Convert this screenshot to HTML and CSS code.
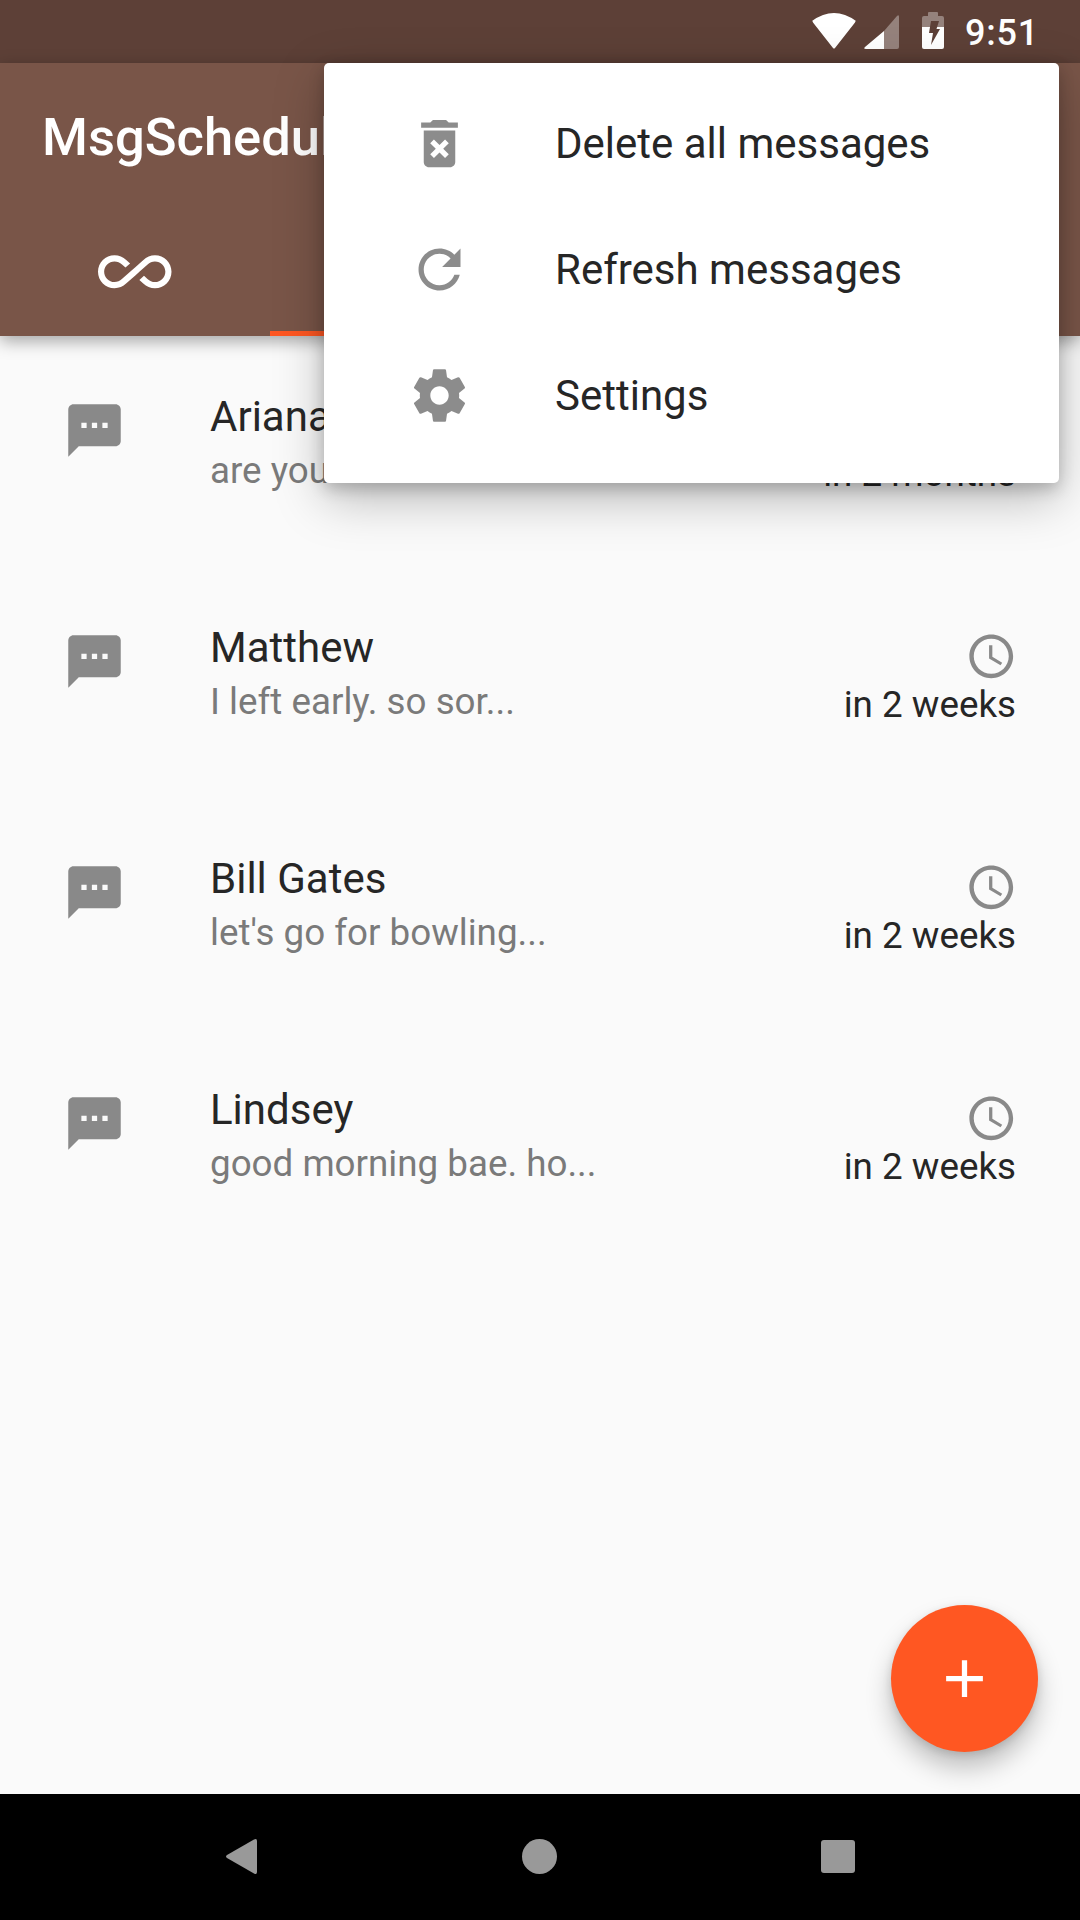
FILE: index.html
```html
<!DOCTYPE html>
<html lang="en">
<head>
  <meta charset="UTF-8">
  <title>MsgScheduler</title>
  <link rel="stylesheet" href="styles.css">
</head>
<body>

  <div class="screen">
    <div class="status-bar">
      <svg class="wifi" width="44" height="36" viewBox="0 0 44 36"><path d="M1 9.500Q1 8 0 8Q22-8 44 8Q43 8 43 9.500L23 35Q22 36 21 35Z" fill="#fff"/></svg>
      <svg class="signal" width="35" height="34" viewBox="0 0 35 34">
        <path d="M20 16L33 1Q35-1 35 2V32Q35 34 33 34H20Z" fill="#fff" opacity=".35"/>
        <path d="M20 16V34H2Q-1 34 1 32Z" fill="#fff"/>
      </svg>
      <svg class="battery" width="22" height="37" viewBox="0 0 22 37">
        <path d="M0 15V6Q0 4 2 4H6V1Q6 0 7 0H15Q16 0 16 1V4H20Q22 4 22 6V15Z" fill="#fff" opacity=".35"/>
        <path d="M0 15H22V35Q22 37 20 37H2Q0 37 0 35Z" fill="#fff"/>
        <path d="M9 9H17L14.500 17H18L9 33L11 21H7Z" fill="#5d4037"/>
      </svg>
      <span class="clock">9:51</span>
    </div>

    <header class="app-bar">
      <div class="toolbar">MsgScheduler</div>
      <div class="tabs">
        <div class="tab">
          <svg class="tab-icon" viewBox="0 0 24 24"><path fill="#fff" d="M18.6 6.620c-1.440 0-2.800.560-3.770 1.530L12 10.660 10.480 12h.010L7.800 14.390c-.640.640-1.490.990-2.400.990-1.870 0-3.390-1.510-3.390-3.380S3.530 8.620 5.400 8.620c.910 0 1.760.350 2.440 1.030l1.130 1 1.510-1.340L9.220 8.200C8.200 7.180 6.840 6.620 5.400 6.620 2.420 6.620 0 9.040 0 12s2.420 5.380 5.400 5.380c1.440 0 2.800-.560 3.770-1.530l2.830-2.500.010.010L13.520 12h-.010l2.690-2.390c.640-.640 1.490-.990 2.400-.990 1.870 0 3.390 1.510 3.390 3.380s-1.520 3.380-3.390 3.380c-.900 0-1.760-.350-2.440-1.030l-1.140-1.010-1.510 1.340 1.270 1.120c1.020 1.010 2.370 1.570 3.820 1.570 2.980 0 5.400-2.410 5.400-5.380s-2.420-5.370-5.400-5.370z"/></svg>
        </div>
        <div class="tab active"></div>
        <div class="tab"></div>
        <div class="tab"></div>
      </div>
    </header>

    <main class="list">
      <div class="row">
        <svg class="icon" viewBox="0 0 24 24"><path class="grey" d="M20 2H4c-1.100 0-1.990.900-1.990 2L2 22l4-4h14c1.100 0 2-.900 2-2V4c0-1.100-.900-2-2-2zM9 11H7V9h2v2zm4 0h-2V9h2v2zm4 0h-2V9h2v2z"/></svg>
        <div class="row-text">
          <div class="name">Ariana</div>
          <div class="preview">are you there...</div>
        </div>
        <div class="when">
          <svg class="clock-icon" viewBox="0 0 24 24"><path class="grey" d="M11.990 2C6.470 2 2 6.480 2 12s4.470 10 9.990 10C17.520 22 22 17.520 22 12S17.520 2 11.990 2zM12 20c-4.420 0-8-3.580-8-8s3.580-8 8-8 8 3.580 8 8-3.580 8-8 8z"/><path class="grey" d="M12.500 7H11v6l5.250 3.150.750-1.230-4.500-2.670z"/></svg>
          <div class="when-text">in 2 months</div>
        </div>
      </div>

      <div class="row">
        <svg class="icon" viewBox="0 0 24 24"><path class="grey" d="M20 2H4c-1.100 0-1.990.900-1.990 2L2 22l4-4h14c1.100 0 2-.900 2-2V4c0-1.100-.900-2-2-2zM9 11H7V9h2v2zm4 0h-2V9h2v2zm4 0h-2V9h2v2z"/></svg>
        <div class="row-text">
          <div class="name">Matthew</div>
          <div class="preview">I left early. so sor...</div>
        </div>
        <div class="when">
          <svg class="clock-icon" viewBox="0 0 24 24"><path class="grey" d="M11.990 2C6.470 2 2 6.480 2 12s4.470 10 9.990 10C17.520 22 22 17.520 22 12S17.520 2 11.990 2zM12 20c-4.420 0-8-3.580-8-8s3.580-8 8-8 8 3.580 8 8-3.580 8-8 8z"/><path class="grey" d="M12.500 7H11v6l5.250 3.150.750-1.230-4.500-2.670z"/></svg>
          <div class="when-text">in 2 weeks</div>
        </div>
      </div>

      <div class="row">
        <svg class="icon" viewBox="0 0 24 24"><path class="grey" d="M20 2H4c-1.100 0-1.990.900-1.990 2L2 22l4-4h14c1.100 0 2-.900 2-2V4c0-1.100-.900-2-2-2zM9 11H7V9h2v2zm4 0h-2V9h2v2zm4 0h-2V9h2v2z"/></svg>
        <div class="row-text">
          <div class="name">Bill Gates</div>
          <div class="preview">let's go for bowling...</div>
        </div>
        <div class="when">
          <svg class="clock-icon" viewBox="0 0 24 24"><path class="grey" d="M11.990 2C6.470 2 2 6.480 2 12s4.470 10 9.990 10C17.520 22 22 17.520 22 12S17.520 2 11.990 2zM12 20c-4.420 0-8-3.580-8-8s3.580-8 8-8 8 3.580 8 8-3.580 8-8 8z"/><path class="grey" d="M12.500 7H11v6l5.250 3.150.750-1.230-4.500-2.670z"/></svg>
          <div class="when-text">in 2 weeks</div>
        </div>
      </div>

      <div class="row">
        <svg class="icon" viewBox="0 0 24 24"><path class="grey" d="M20 2H4c-1.100 0-1.990.900-1.990 2L2 22l4-4h14c1.100 0 2-.900 2-2V4c0-1.100-.900-2-2-2zM9 11H7V9h2v2zm4 0h-2V9h2v2zm4 0h-2V9h2v2z"/></svg>
        <div class="row-text">
          <div class="name">Lindsey</div>
          <div class="preview">good morning bae. ho...</div>
        </div>
        <div class="when">
          <svg class="clock-icon" viewBox="0 0 24 24"><path class="grey" d="M11.990 2C6.470 2 2 6.480 2 12s4.470 10 9.990 10C17.520 22 22 17.520 22 12S17.520 2 11.990 2zM12 20c-4.420 0-8-3.580-8-8s3.580-8 8-8 8 3.580 8 8-3.580 8-8 8z"/><path class="grey" d="M12.500 7H11v6l5.250 3.150.750-1.230-4.500-2.670z"/></svg>
          <div class="when-text">in 2 weeks</div>
        </div>
      </div>
    </main>

    <nav class="nav-bar">
      <svg width="31" height="35" viewBox="0 0 31 35"><path d="M1 19Q-1 17.500 1 16L28 .500Q31-1 31 2V33Q31 36 28 34.500Z" fill="#999"/></svg>
      <div class="nav-circle"></div>
      <div class="nav-square"></div>
    </nav>

    <!-- popup menu lies over the app bar and the first row -->
    <div class="menu">
      <div class="menu-item">
        <svg class="icon" viewBox="0 0 24 24"><path class="grey" d="M6 19c0 1.100.900 2 2 2h8c1.100 0 2-.900 2-2V7H6v12zm2.460-7.120l1.410-1.410L12 12.590l2.120-2.120 1.410 1.410L13.410 14l2.120 2.120-1.410 1.410L12 15.410l-2.120 2.120-1.410-1.410L10.590 14l-2.130-2.120zM15.500 4l-1-1h-5l-1 1H5v2h14V4z"/></svg>
        <span>Delete all messages</span>
      </div>
      <div class="menu-item">
        <svg class="icon" viewBox="0 0 24 24"><path class="grey" d="M17.650 6.350C16.200 4.900 14.210 4 12 4c-4.420 0-7.990 3.580-7.990 8s3.570 8 7.990 8c3.730 0 6.840-2.550 7.730-6h-2.080c-.820 2.330-3.040 4-5.650 4-3.310 0-6-2.690-6-6s2.690-6 6-6c1.660 0 3.140.690 4.220 1.780L13 11h7V4l-2.350 2.350z"/></svg>
        <span>Refresh messages</span>
      </div>
      <div class="menu-item">
        <svg class="icon" viewBox="0 0 24 24"><path class="grey" d="M19.430 12.980c.040-.320.070-.640.070-.980s-.030-.660-.070-.980l2.110-1.650c.190-.150.240-.420.120-.640l-2-3.460c-.120-.220-.390-.300-.610-.220l-2.490 1c-.520-.400-1.080-.730-1.690-.980l-.380-2.650C14.460 2.180 14.250 2 14 2h-4c-.250 0-.460.180-.490.420l-.380 2.650c-.610.250-1.170.590-1.690.980l-2.490-1c-.230-.090-.490 0-.610.220l-2 3.460c-.130.220-.070.490.120.640l2.110 1.650c-.040.320-.070.650-.070.980s.030.660.070.980l-2.110 1.650c-.190.150-.240.420-.120.640l2 3.460c.120.220.390.300.610.220l2.490-1c.520.400 1.080.730 1.690.980l.380 2.650c.030.240.240.420.490.420h4c.250 0 .460-.180.490-.420l.380-2.650c.610-.250 1.170-.590 1.690-.980l2.490 1c.230.090.490 0 .610-.220l2-3.460c.120-.220.070-.490-.120-.640l-2.110-1.650zM12 15.500c-1.930 0-3.500-1.570-3.500-3.500s1.570-3.500 3.500-3.500 3.500 1.570 3.500 3.500-1.570 3.500-3.500 3.500z"/></svg>
        <span>Settings</span>
      </div>
    </div>

    <div class="fab">
      <svg class="icon" viewBox="0 0 24 24"><path fill="#fff" d="M19 13h-6v6h-2v-6H5v-2h6V5h2v6h6v2z"/></svg>
    </div>
  </div>

</body>
</html>
```

FILE: styles.css
```css
body {
  margin: 0;
  font-family: Roboto, sans-serif;
  background-color: #fafafa;
}

.screen {
  position: relative;
  width: 1080px;
  height: 1920px;
  overflow: hidden;
  display: flex;
  flex-direction: column;
}

.icon {
  width: 63px;
  height: 63px;
  flex-shrink: 0;
  display: block;
}

.grey {
  fill: rgba(0, 0, 0, 0.45);
}

.status-bar {
  height: 63px;
  background-color: #5d4037;
  display: flex;
  align-items: flex-start;
  padding-right: 41px;
  justify-content: flex-end;
  box-sizing: border-box;
}

.wifi {
  margin-top: 13px;
  margin-right: 8px;
}

.signal {
  margin-top: 15px;
  margin-right: 23px;
}

.battery {
  margin-top: 12px;
  margin-right: 21px;
}

.clock {
  color: white;
  font-size: 36px;
  font-weight: 500;
  line-height: 42px;
  margin-top: 12px;
  letter-spacing: 0.8px;
}

.app-bar {
  height: 273px;
  background-color: #795548;
  box-shadow: 0 5px 16px rgba(0, 0, 0, 0.35);
  position: relative;
  flex-shrink: 0;
}

.toolbar {
  height: 149px;
  padding-left: 42px;
  line-height: 149px;
  color: white;
  font-size: 52.5px;
  font-weight: 500;
}

.tabs {
  height: 124px;
  display: flex;
}

.tab {
  flex: 1;
  display: flex;
  justify-content: center;
  align-items: flex-start;
  box-sizing: border-box;
}

.tab-icon {
  width: 73.5px;
  height: 73.5px;
  margin-top: 23px;
}

.tab.active {
  border-bottom: 5px solid #ff5722;
}

.list {
  flex: 1;
}

.row {
  height: 231px;
  box-sizing: border-box;
  padding: 63px 64px 0 63px;
  display: flex;
  align-items: flex-start;
}

.row-text {
  flex: 1;
  margin-left: 84px;
  margin-top: -7px;
}

.name {
  font-size: 42px;
  line-height: 49px;
  color: #262626;
}

.preview {
  font-size: 36.75px;
  line-height: 43px;
  margin-top: 8px;
  color: #7a7a7a;
}

.when {
  display: flex;
  flex-direction: column;
  align-items: flex-end;
}

.clock-icon {
  width: 52.5px;
  height: 52.5px;
  display: block;
  margin-right: -1px;
}

.when-text {
  font-size: 36.75px;
  line-height: 43px;
  color: #262626;
}

.nav-bar {
  height: 126px;
  flex-shrink: 0;
  box-sizing: border-box;
  padding: 0 225px 2px 226px;
  background-color: black;
  display: flex;
  align-items: center;
  justify-content: space-between;
}

.nav-circle {
  width: 35px;
  height: 35px;
  border-radius: 50%;
  background-color: #999;
}

.nav-square {
  width: 34px;
  height: 33px;
  border-radius: 3px;
  background-color: #999;
}

.menu {
  position: absolute;
  top: 63px;
  left: 324px;
  width: 735px;
  padding: 17px 0 25px;
  box-sizing: border-box;
  background: white;
  border-radius: 5px;
  box-shadow: 0 16px 50px rgba(0, 0, 0, 0.26), 0 6px 16px rgba(0, 0, 0, 0.2);
}

.menu-item {
  height: 126px;
  display: flex;
  align-items: center;
  gap: 84px;
  padding-left: 84px;
  font-size: 42px;
  color: #262626;
}

.fab {
  position: absolute;
  right: 42px;
  bottom: 168px;
  width: 147px;
  height: 147px;
  border-radius: 50%;
  background-color: #ff5722;
  box-shadow: 0 16px 26px rgba(0, 0, 0, 0.24), 0 3px 8px rgba(0, 0, 0, 0.12);
  display: flex;
  align-items: center;
  justify-content: center;
}
```
